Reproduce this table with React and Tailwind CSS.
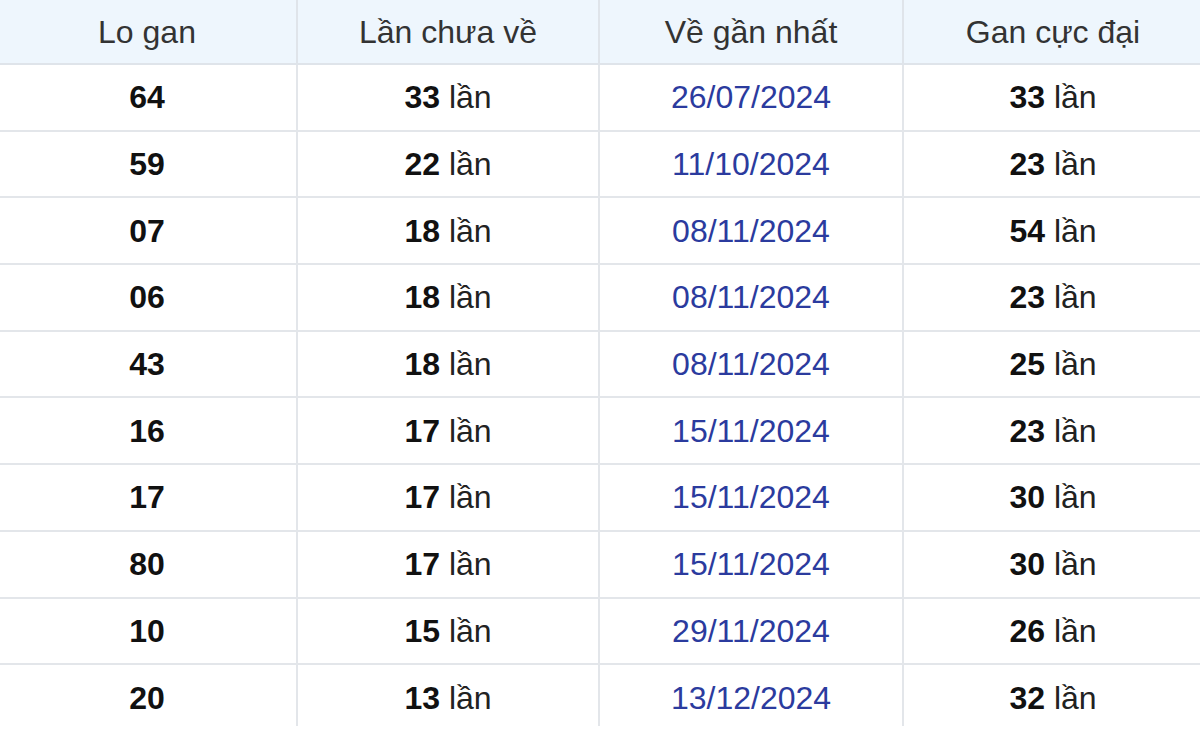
import React from 'react'

const rows = [
  ['64', '33', '26/07/2024', '33'],
  ['59', '22', '11/10/2024', '23'],
  ['07', '18', '08/11/2024', '54'],
  ['06', '18', '08/11/2024', '23'],
  ['43', '18', '08/11/2024', '25'],
  ['16', '17', '15/11/2024', '23'],
  ['17', '17', '15/11/2024', '30'],
  ['80', '17', '15/11/2024', '30'],
  ['10', '15', '29/11/2024', '26'],
  ['20', '13', '13/12/2024', '32'],
]

export default function App() {
  return (
    <div className="w-[1200px] h-[736px] overflow-hidden bg-white" style={{ fontFamily: '"Liberation Sans", Arial, sans-serif' }}>
      <div className="h-[726px] overflow-hidden">
        <table className="w-[1206px] -ml-[4px] border-collapse table-fixed text-[32px] leading-none">
          <colgroup>
            <col className="w-[300px]" />
            <col className="w-[302px]" />
            <col className="w-[304px]" />
            <col className="w-[300px]" />
          </colgroup>
          <thead>
            <tr className="h-[64px] bg-[#eef6fd] text-[#333]">
              <th className="font-normal border-2 border-t-0 border-[#dfe4ea]">Lo gan</th>
              <th className="font-normal border-2 border-t-0 border-[#dfe4ea]">Lần chưa về</th>
              <th className="font-normal border-2 border-t-0 border-[#dfe4ea]">Về gần nhất</th>
              <th className="font-normal border-2 border-t-0 border-[#dfe4ea]">Gan cực đại</th>
            </tr>
          </thead>
          <tbody>
            {rows.map((r, i) => (
              <tr key={i} className="h-[66.7px] text-center">
                <td className="border-2 border-[#e3e6ea] font-bold text-[#111]">{r[0]}</td>
                <td className="border-2 border-[#e3e6ea] text-[#222]">
                  <b className="text-[#111]">{r[1]}</b> lần
                </td>
                <td className="border-2 border-[#e3e6ea] text-[#2b3b9e]">{r[2]}</td>
                <td className="border-2 border-[#e3e6ea] text-[#222]">
                  <b className="text-[#111]">{r[3]}</b> lần
                </td>
              </tr>
            ))}
          </tbody>
        </table>
      </div>
    </div>
  )
}
